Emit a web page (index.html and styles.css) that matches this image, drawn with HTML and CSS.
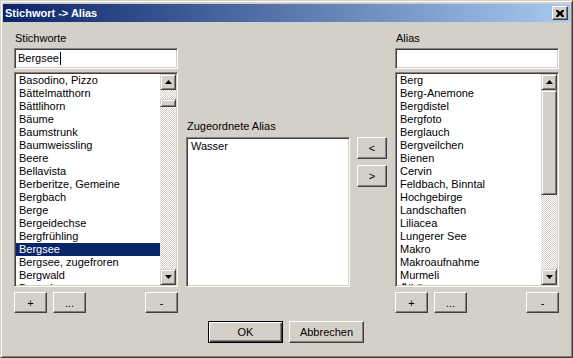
FILE: index.html
```html
<!DOCTYPE html>
<html lang="de">
<head>
  <meta charset="UTF-8">
  <title>Stichwort -&gt; Alias</title>
  <link rel="stylesheet" href="styles.css">
</head>
<body>

  <div class="window">
    <div class="titlebar">
      <span class="title">Stichwort -&gt; Alias</span>
      <button class="close" aria-label="Schliessen">
        <svg width="8" height="7" viewBox="0 0 8 7"><path d="M0 0h2l2 2 2-2h2v1l-2 2.5 2 2.5v1h-2l-2-2-2 2h-2v-1l2-2.5-2-2.5z" fill="#000"/></svg>
      </button>
    </div>

    <div class="client">
      <div class="columns">

        <div class="col pick">
          <label class="caption">Stichworte</label>
          <div class="field">Bergsee<i class="caret"></i></div>
          <div class="listbox">
            <ul class="items">
              <li>Basodino, Pizzo</li>
              <li>Bättelmatthorn</li>
              <li>Bättlihorn</li>
              <li>Bäume</li>
              <li>Baumstrunk</li>
              <li>Baumweissling</li>
              <li>Beere</li>
              <li>Bellavista</li>
              <li>Berberitze, Gemeine</li>
              <li>Bergbach</li>
              <li>Berge</li>
              <li>Bergeidechse</li>
              <li>Bergfrühling</li>
              <li class="selected">Bergsee</li>
              <li>Bergsee, zugefroren</li>
              <li>Bergwald</li>
              <li>Bergwiese</li>
            </ul>
            <div class="vscroll">
              <span class="arrow"><svg width="7" height="4" viewBox="0 0 7 4"><path d="M3.5 0L7 4H0z" fill="#000"/></svg></span>
              <div class="track"><span class="thumb thumb-small"></span></div>
              <span class="arrow"><svg width="7" height="4" viewBox="0 0 7 4"><path d="M0 0h7L3.5 4z" fill="#000"/></svg></span>
            </div>
          </div>
          <div class="btnrow">
            <button class="btn small">+</button>
            <button class="btn small">...</button>
            <button class="btn small minus">-</button>
          </div>
        </div>

        <div class="col assigned">
          <label class="caption">Zugeordnete Alias</label>
          <div class="listbox plain">
            <ul class="items">
              <li>Wasser</li>
            </ul>
          </div>
        </div>

        <div class="movebtns">
          <button class="btn move">&lt;</button>
          <button class="btn move">&gt;</button>
        </div>

        <div class="col pick">
          <label class="caption">Alias</label>
          <div class="field"></div>
          <div class="listbox">
            <ul class="items">
              <li>Berg</li>
              <li>Berg-Anemone</li>
              <li>Bergdistel</li>
              <li>Bergfoto</li>
              <li>Berglauch</li>
              <li>Bergveilchen</li>
              <li>Bienen</li>
              <li>Cervin</li>
              <li>Feldbach, Binntal</li>
              <li>Hochgebirge</li>
              <li>Landschaften</li>
              <li>Liliacea</li>
              <li>Lungerer See</li>
              <li>Makro</li>
              <li>Makroaufnahme</li>
              <li>Murmeli</li>
              <li>Ölbäume</li>
            </ul>
            <div class="vscroll">
              <span class="arrow"><svg width="7" height="4" viewBox="0 0 7 4"><path d="M3.5 0L7 4H0z" fill="#000"/></svg></span>
              <div class="track"><span class="thumb thumb-large"></span></div>
              <span class="arrow"><svg width="7" height="4" viewBox="0 0 7 4"><path d="M0 0h7L3.5 4z" fill="#000"/></svg></span>
            </div>
          </div>
          <div class="btnrow">
            <button class="btn small">+</button>
            <button class="btn small">...</button>
            <button class="btn small minus">-</button>
          </div>
        </div>

      </div>

      <div class="footer">
        <button class="btn wide default">OK</button>
        <button class="btn wide">Abbrechen</button>
      </div>
    </div>
  </div>

</body>
</html>
```

FILE: styles.css
```css
* { box-sizing: border-box; }

body {
  margin: 0;
  padding: 0;
  font-family: 'Liberation Sans', Arial, sans-serif;
  font-size: 11px;
  color: #000;
  background: #404040;
}

.window {
  width: 573px;
  height: 358px;
  background: #d4d0c8;
  border: 1px solid;
  border-color: #d4d0c8 #404040 #404040 #d4d0c8;
  box-shadow: inset 1px 1px #fff, inset -1px -1px #808080;
  padding: 3px 2px 2px 2px;
}

.titlebar {
  height: 18px;
  display: flex;
  align-items: center;
  padding: 0 2px;
  background: linear-gradient(to right, #0a246a, #a6caf0);
}

.title {
  flex: 1;
  color: #fff;
  font-weight: bold;
  font-size: 11px;
}

.close {
  width: 16px;
  height: 14px;
  padding: 0;
  display: flex;
  align-items: center;
  justify-content: center;
  background: #d4d0c8;
  border: 1px solid;
  border-color: #fff #404040 #404040 #fff;
  box-shadow: inset -1px -1px #808080;
}

.client {
  padding: 10px 0 0 11px;
}

.columns {
  display: flex;
  align-items: flex-start;
}

.col {
  width: 164px;
  display: flex;
  flex-direction: column;
}

.caption {
  height: 13px;
  line-height: 13px;
  padding-left: 1px;
}

.pick .caption { margin-bottom: 3px; }

.field {
  height: 21px;
  line-height: 17px;
  padding: 1px 3px;
  background: #fff;
  border: 1px solid;
  border-color: #808080 #fff #fff #808080;
  box-shadow: inset 1px 1px #404040, inset -1px -1px #d4d0c8;
  margin-bottom: 3px;
  display: flex;
  align-items: center;
}

.caret {
  width: 1px;
  height: 13px;
  background: #000;
  margin-left: 1px;
}

.listbox {
  height: 215px;
  display: flex;
  padding: 1px;
  background: #fff;
  border: 1px solid;
  border-color: #808080 #fff #fff #808080;
  box-shadow: inset 1px 1px #404040, inset -1px -1px #d4d0c8;
  overflow: hidden;
}

.items {
  flex: 1;
  list-style: none;
  margin: 0;
  padding: 0;
  overflow: hidden;
}

.items li {
  height: 13px;
  line-height: 13px;
  padding-left: 3px;
  white-space: nowrap;
}

.items li.selected {
  background: #0a246a;
  color: #fff;
}

.vscroll {
  width: 16px;
  display: flex;
  flex-direction: column;
}

.arrow,
.thumb {
  display: flex;
  align-items: center;
  justify-content: center;
  background: #d4d0c8;
  border: 1px solid;
  border-color: #d4d0c8 #404040 #404040 #d4d0c8;
  box-shadow: inset 1px 1px #fff, inset -1px -1px #808080;
}

.arrow {
  height: 16px;
  flex: 0 0 16px;
}

.track {
  flex: 1;
  background-color: #fff;
  background-image: repeating-conic-gradient(#d4d0c8 0 25%, #fff 0 50%);
  background-size: 2px 2px;
}

.thumb {
  display: block;
  width: 16px;
}

.thumb-small {
  height: 8px;
  margin-top: 9px;
}

.thumb-large {
  height: 105px;
}

.btnrow {
  display: flex;
  gap: 6px;
  margin-top: 5px;
}

.btn {
  font-family: inherit;
  font-size: 11px;
  color: #000;
  padding: 0;
  background: #d4d0c8;
  border: 1px solid;
  border-color: #fff #404040 #404040 #fff;
  box-shadow: inset -1px -1px #808080;
}

.small {
  width: 33px;
  height: 21px;
}

.minus { margin-left: auto; }

.assigned {
  margin-left: 8px;
  height: 255px;
  justify-content: flex-end;
}

.assigned .caption { margin-bottom: 4px; }

.plain {
  height: 150px;
  padding: 2px 1px;
}

.movebtns {
  margin: 105px 0 0 7px;
  display: flex;
  flex-direction: column;
  gap: 6px;
}

.move {
  width: 30px;
  height: 22px;
}

.columns .pick + .assigned + .movebtns + .pick { margin-left: 8px; }

.footer {
  display: flex;
  justify-content: center;
  gap: 6px;
  margin: 8px 0 0 -12px;
}

.wide {
  width: 75px;
  height: 22px;
}

.default {
  border-color: #000;
  box-shadow: inset 1px 1px #fff, inset -1px -1px #404040, inset -2px -2px #808080;
}
```
